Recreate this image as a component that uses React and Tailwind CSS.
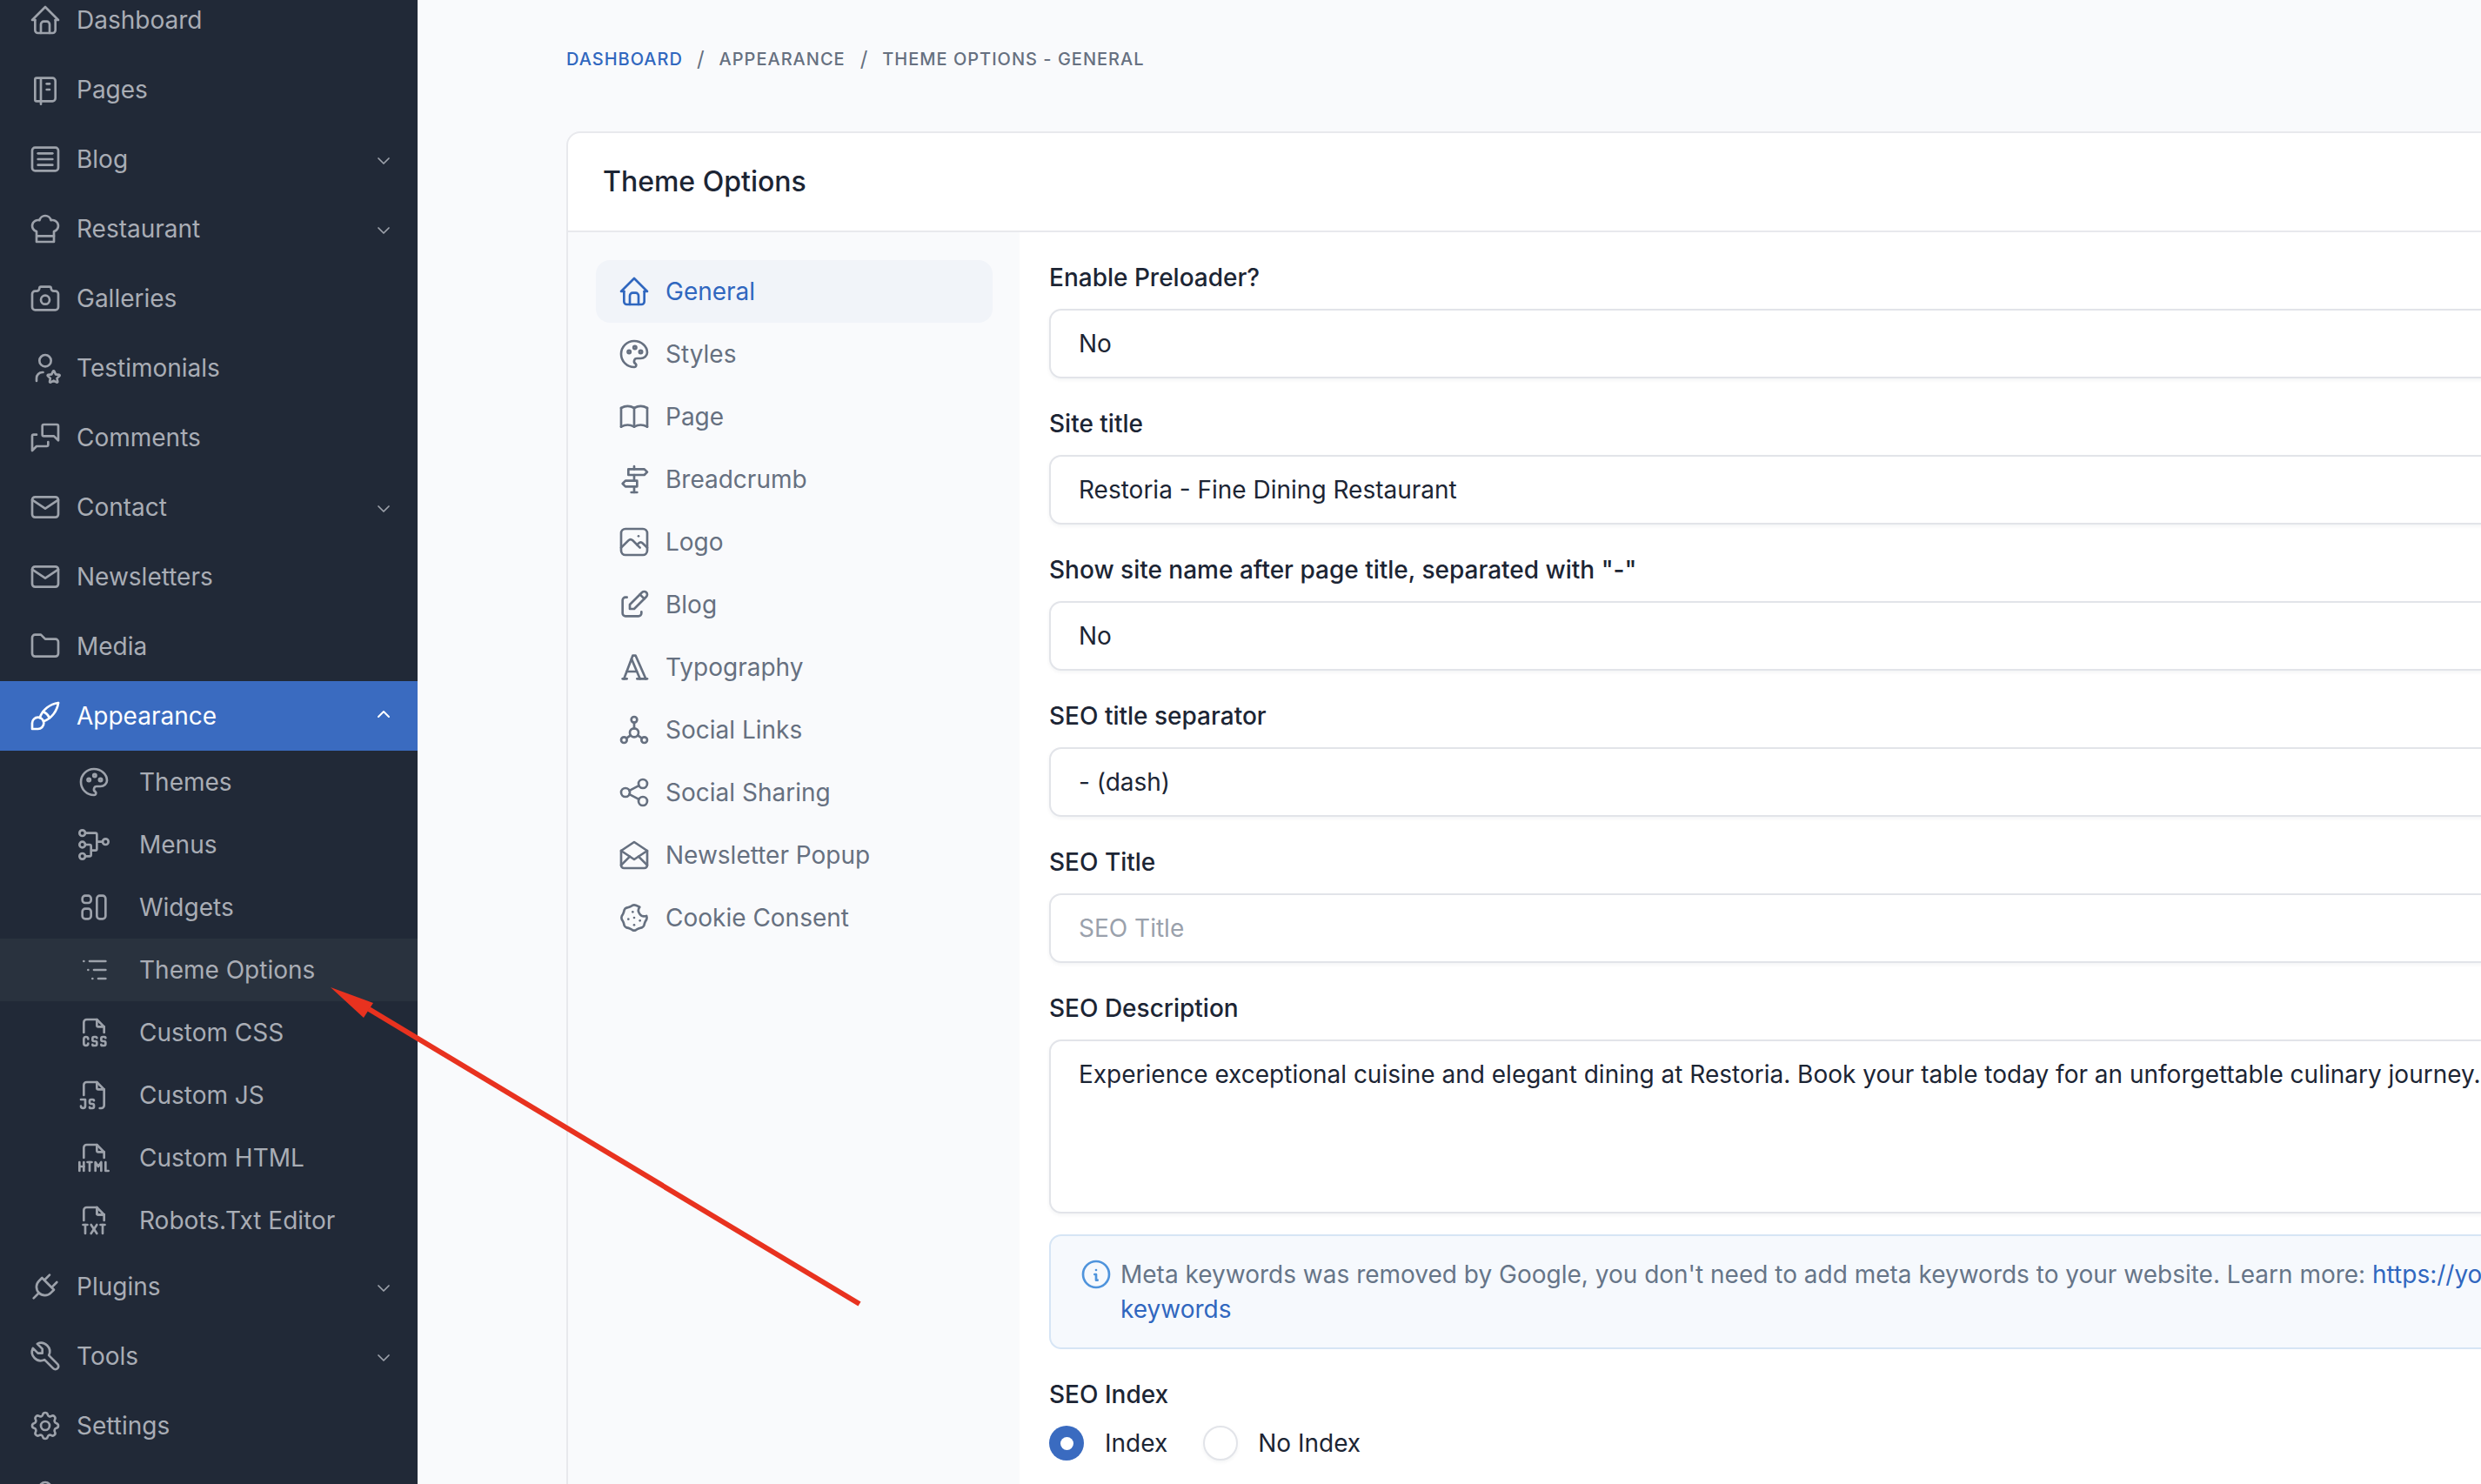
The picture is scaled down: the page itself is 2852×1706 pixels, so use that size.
import React from "react";
import {
  TbHome, TbNotebook, TbArticle, TbChefHat, TbCamera, TbUserStar, TbMessages, TbMail, TbMailOpened, TbFolder, TbBrush,
  TbPalette, TbTournament, TbLayout, TbListTree, TbFileTypeCss, TbFileTypeJs, TbFileTypeHtml, TbFileTypeTxt, TbPlug, TbTool,
  TbSettings, TbUserShield, TbChevronDown, TbChevronUp, TbBook, TbDirections, TbPhoto, TbEdit, TbTypography, TbSocial, TbShare,
  TbCookie, TbInfoCircle,
} from "react-icons/tb";

const sw = 1.6;

function SideItem({ icon: I, label, chevron, active }) {
  return (
    <div className={`flex h-[80px] items-center gap-[16px] pl-[32px] pr-[27px] text-[28px] leading-[40px] ${active ? "bg-[#3a6bc0] text-white" : "text-[#a9adb5]"}`}>
      <I size={40} strokeWidth={sw} className={active ? "text-white" : "text-[#9da2ab]"} />
      <span className="flex-1">{label}</span>
      {chevron === "down" && <TbChevronDown size={24} strokeWidth={1.75} className="mt-[4px] text-[#9da2ab]" />}
      {chevron === "up" && <TbChevronUp size={24} strokeWidth={2} className="mt-[-4px] text-white" />}
    </div>
  );
}

function SubItem({ icon: I, label, hover }) {
  return (
    <div className={`flex h-[72px] items-center gap-[32px] pl-[88px] text-[28px] leading-[40px] text-[#a9adb5] ${hover ? "bg-[#29323e]" : ""}`}>
      <I size={40} strokeWidth={sw} className="text-[#9da2ab]" />
      <span>{label}</span>
    </div>
  );
}

function NavItem({ icon: I, label, active }) {
  return (
    <div className={`flex h-[72px] items-center gap-[16px] rounded-[16px] pl-[24px] text-[28px] leading-[40px] ${active ? "bg-[#f1f4f9] text-[#3067bf]" : "text-[#667080]"}`}>
      <I size={40} strokeWidth={sw} />
      <span>{label}</span>
    </div>
  );
}

function Field({ label, value, placeholder }) {
  return (
    <div className="mb-[32px]">
      <div className="mb-[16px] text-[28px] font-medium leading-[40px] text-[#1c2534]">{label}</div>
      <div className={`flex h-[80px] items-center rounded-[14px] border-2 border-[#e2e4e9] bg-white px-[32px] text-[28px] leading-[40px] shadow-[0_2px_4px_rgba(24,36,51,0.05)] ${placeholder ? "text-[#9aa1ac]" : "text-[#1c2534]"}`}>
        {value || placeholder}
      </div>
    </div>
  );
}

export default function App() {
  return (
    <div className="relative flex h-[1706px] w-[2852px] overflow-hidden bg-[#f9fafc] font-['Inter',sans-serif]">
      <aside className="h-full w-[480px] shrink-0 overflow-hidden bg-[#212937]">
        <div className="mt-[-17px]">
          <SideItem icon={TbHome} label="Dashboard" />
          <SideItem icon={TbNotebook} label="Pages" />
          <SideItem icon={TbArticle} label="Blog" chevron="down" />
          <SideItem icon={TbChefHat} label="Restaurant" chevron="down" />
          <SideItem icon={TbCamera} label="Galleries" />
          <SideItem icon={TbUserStar} label="Testimonials" />
          <SideItem icon={TbMessages} label="Comments" />
          <SideItem icon={TbMail} label="Contact" chevron="down" />
          <SideItem icon={TbMail} label="Newsletters" />
          <SideItem icon={TbFolder} label="Media" />
          <SideItem icon={TbBrush} label="Appearance" chevron="up" active />
          <SubItem icon={TbPalette} label="Themes" />
          <SubItem icon={TbTournament} label="Menus" />
          <SubItem icon={TbLayout} label="Widgets" />
          <SubItem icon={TbListTree} label="Theme Options" hover />
          <SubItem icon={TbFileTypeCss} label="Custom CSS" />
          <SubItem icon={TbFileTypeJs} label="Custom JS" />
          <SubItem icon={TbFileTypeHtml} label="Custom HTML" />
          <SubItem icon={TbFileTypeTxt} label="Robots.Txt Editor" />
          <SideItem icon={TbPlug} label="Plugins" chevron="down" />
          <SideItem icon={TbTool} label="Tools" chevron="down" />
          <SideItem icon={TbSettings} label="Settings" />
          <SideItem icon={TbUserShield} label="" />
        </div>
      </aside>

      <main className="min-w-0 flex-1 pl-[171px] pt-[50px]">
        <div className="flex h-[36px] items-center whitespace-nowrap text-[20px] font-medium uppercase leading-[36px] tracking-[0.05em] text-[#667080]">
          <span className="text-[#3067bf]">Dashboard</span>
          <span className="mx-[16px] text-[24px] font-normal">/</span>
          <span>Appearance</span>
          <span className="ml-[17px] mr-[16px] text-[24px] font-normal">/</span>
          <span>Theme Options - General</span>
        </div>

        <section className="mt-[65px] w-[2600px] rounded-[16px] border-2 border-[#e8e9ed] bg-white">
          <div className="flex h-[114px] items-center border-b-2 border-[#e8e9ed] pl-[40px] text-[32px] font-medium leading-[40px] text-[#1c2534]">
            Theme Options
          </div>
          <div className="flex">
            <div className="w-[519px] shrink-0 bg-[#f9fafc] pl-[32px] pr-[31px] pt-[32px]">
              <NavItem icon={TbHome} label="General" active />
              <NavItem icon={TbPalette} label="Styles" />
              <NavItem icon={TbBook} label="Page" />
              <NavItem icon={TbDirections} label="Breadcrumb" />
              <NavItem icon={TbPhoto} label="Logo" />
              <NavItem icon={TbEdit} label="Blog" />
              <NavItem icon={TbTypography} label="Typography" />
              <NavItem icon={TbSocial} label="Social Links" />
              <NavItem icon={TbShare} label="Social Sharing" />
              <NavItem icon={TbMailOpened} label="Newsletter Popup" />
              <NavItem icon={TbCookie} label="Cookie Consent" />
            </div>
            <div className="min-w-0 flex-1 px-[34px] pb-[100px] pt-[32px]">
              <Field label="Enable Preloader?" value="No" />
              <Field label="Site title" value="Restoria - Fine Dining Restaurant" />
              <Field label={'Show site name after page title, separated with "-"'} value="No" />
              <Field label="SEO title separator" value="- (dash)" />
              <Field label="SEO Title" placeholder="SEO Title" />
              <div className="mb-[24px]">
                <div className="mb-[16px] text-[28px] font-medium leading-[40px] text-[#1c2534]">SEO Description</div>
                <div className="h-[200px] rounded-[14px] border-2 border-[#e2e4e9] bg-white px-[32px] py-[18px] text-[28px] leading-[40px] text-[#1c2534] shadow-[0_2px_4px_rgba(24,36,51,0.05)]">
                  Experience exceptional cuisine and elegant dining at Restoria. Book your table today for an unforgettable culinary journey.
                </div>
              </div>
              <div className="mb-[32px] flex gap-[8px] rounded-[14px] border-2 border-[#d6e5f5] bg-[#f6f9fd] py-[24px] pl-[32px] text-[28px] leading-[40px] text-[#667588]">
                <TbInfoCircle size={40} strokeWidth={sw} className="shrink-0 text-[#4f94dc]" />
                <div className="whitespace-nowrap">
                  Meta keywords was removed by Google, you don't need to add meta keywords to your website. Learn more:{" "}
                  <span className="text-[#3067bf]">https://yoast.com/meta-<br />keywords</span>
                </div>
              </div>
              <div className="mb-[16px] text-[28px] font-medium leading-[40px] text-[#1c2534]">SEO Index</div>
              <div className="flex items-center text-[28px] leading-[40px] text-[#1c2534]">
                <span className="flex size-[40px] items-center justify-center rounded-full bg-[#3a6bc0]">
                  <span className="size-[15px] rounded-full bg-white" />
                </span>
                <span className="ml-[24px] mr-[41px]">Index</span>
                <span className="size-[40px] rounded-full border-2 border-[#e2e4e9] bg-white shadow-[0_2px_4px_rgba(24,36,51,0.05)]" />
                <span className="ml-[23px]">No Index</span>
              </div>
            </div>
          </div>
        </section>
      </main>

      <svg className="pointer-events-none absolute left-0 top-0" width="2852" height="1706" viewBox="0 0 2852 1706">
        <line x1="988" y1="1499" x2="424" y2="1160" stroke="#e8321f" strokeWidth="6" />
        <polygon points="380,1135 429,1153 418,1170" fill="#e8321f" />
      </svg>
    </div>
  );
}
